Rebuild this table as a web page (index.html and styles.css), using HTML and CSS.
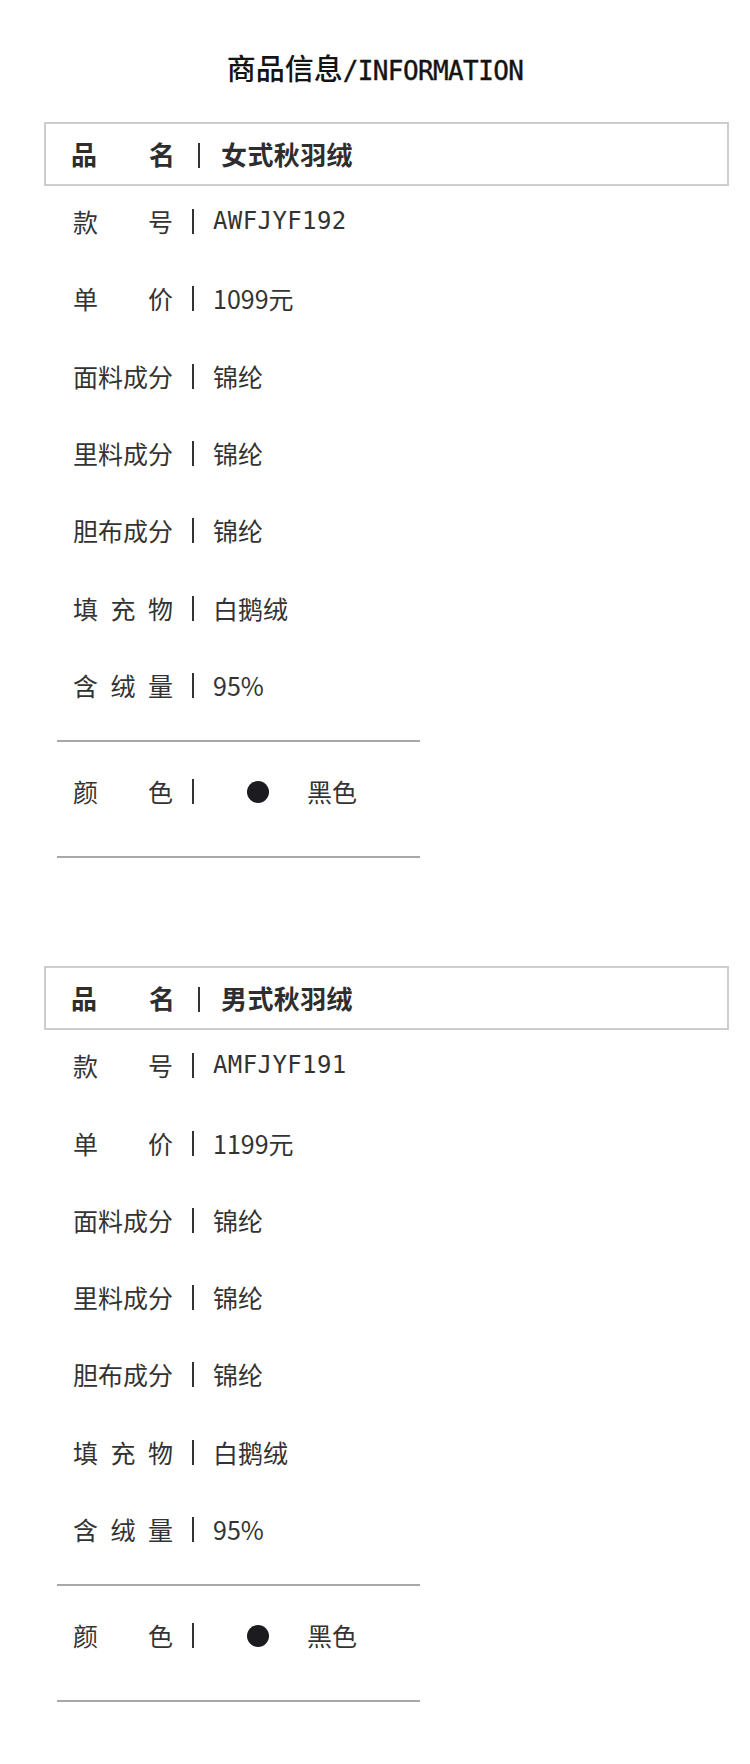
FILE: index.html
```html
<!DOCTYPE html>
<html lang="zh-CN">
<head>
<meta charset="utf-8">
<title>商品信息</title>
<link rel="stylesheet" href="styles.css">
</head>
<body>
<div class="page">
  <h1 class="title">商品信息<span class="title-latin">/INFORMATION</span></h1>

  <section class="product">
    <div class="name-box">
      <span class="name-label">品 名</span><span class="name-sep"></span><span class="name-value">女式秋羽绒</span>
    </div>
    <div class="rows">
      <div class="row"><span class="label">款 号</span><span class="sep"></span><span class="value mono">AWFJYF192</span></div>
      <div class="row"><span class="label">单 价</span><span class="sep"></span><span class="value">1099元</span></div>
      <div class="row"><span class="label">面料成分</span><span class="sep"></span><span class="value">锦纶</span></div>
      <div class="row"><span class="label">里料成分</span><span class="sep"></span><span class="value">锦纶</span></div>
      <div class="row"><span class="label">胆布成分</span><span class="sep"></span><span class="value">锦纶</span></div>
      <div class="row"><span class="label">填 充 物</span><span class="sep"></span><span class="value">白鹅绒</span></div>
      <div class="row"><span class="label">含 绒 量</span><span class="sep"></span><span class="value">95%</span></div>
    </div>
    <div class="color-block">
      <div class="row"><span class="label">颜 色</span><span class="sep"></span><span class="dot"></span><span class="value">黑色</span></div>
    </div>
  </section>

  <section class="product">
    <div class="name-box">
      <span class="name-label">品 名</span><span class="name-sep"></span><span class="name-value">男式秋羽绒</span>
    </div>
    <div class="rows">
      <div class="row"><span class="label">款 号</span><span class="sep"></span><span class="value mono">AMFJYF191</span></div>
      <div class="row"><span class="label">单 价</span><span class="sep"></span><span class="value">1199元</span></div>
      <div class="row"><span class="label">面料成分</span><span class="sep"></span><span class="value">锦纶</span></div>
      <div class="row"><span class="label">里料成分</span><span class="sep"></span><span class="value">锦纶</span></div>
      <div class="row"><span class="label">胆布成分</span><span class="sep"></span><span class="value">锦纶</span></div>
      <div class="row"><span class="label">填 充 物</span><span class="sep"></span><span class="value">白鹅绒</span></div>
      <div class="row"><span class="label">含 绒 量</span><span class="sep"></span><span class="value">95%</span></div>
    </div>
    <div class="color-block">
      <div class="row"><span class="label">颜 色</span><span class="sep"></span><span class="dot"></span><span class="value">黑色</span></div>
    </div>
  </section>
</div>
</body>
</html>
```

FILE: styles.css
```css
html, body {
  margin: 0;
  padding: 0;
  background: #ffffff;
}

body {
  font-family: "Noto Sans CJK SC", "Noto Sans", sans-serif;
  color: #333333;
}

.page {
  width: 750px;
  padding: 47px 0 62px;
  box-sizing: border-box;
}

.title {
  margin: 0;
  height: 40px;
  line-height: 40px;
  text-align: center;
  font-size: 29px;
  font-weight: 500;
  color: #141414;
  letter-spacing: 0;
}

.title-latin {
  font-family: "DejaVu Sans Mono", "Liberation Mono", monospace;
  font-size: 26px;
  font-weight: 400;
  letter-spacing: -0.6px;
  -webkit-text-stroke: 0.4px #141414;
}

.product {
  margin: 35px 0 0 44px;
  width: 685px;
}

.product + .product {
  margin-top: 108px;
}

.name-box {
  height: 64px;
  box-sizing: border-box;
  border: 2px solid #cdcdcd;
  padding-left: 25px;
  display: flex;
  align-items: center;
  font-size: 26px;
  font-weight: 600;
  color: #2e2e2e;
}

.name-label {
  width: 104px;
  text-align: justify;
  text-align-last: justify;
  line-height: 30px;
}

.name-sep {
  width: 2px;
  height: 25px;
  background: #333333;
  margin: 2px 21px 0 23px;
}

.name-value {
  letter-spacing: 0.4px;
  line-height: 30px;
}

.rows {
  padding-left: 29px;
}

.row {
  height: 77.3px;
  box-sizing: border-box;
  padding-bottom: 7px;
  display: flex;
  align-items: center;
  font-size: 25px;
}

.label {
  width: 100px;
  text-align: justify;
  text-align-last: justify;
  line-height: 30px;
}

.sep {
  width: 2px;
  height: 25px;
  background: #333333;
  margin: 1px 19px 0 19px;
}

.value {
  line-height: 30px;
}

.mono {
  font-family: "DejaVu Sans Mono", "Liberation Mono", monospace;
  font-size: 24px;
  letter-spacing: 0.4px;
}

.color-block {
  box-sizing: border-box;
  margin: 13px 0 0 13px;
  width: 363px;
  border-top: 2px solid #a8a8a8;
  border-bottom: 2px solid #a8a8a8;
  padding: 10px 0 27px 16px;
}

.color-block .row {
  height: 77px;
  padding-bottom: 0;
}

.dot {
  width: 22px;
  height: 22px;
  border-radius: 50%;
  background: #1c1c20;
  margin: 3px 38px 0 34px;
}
```
